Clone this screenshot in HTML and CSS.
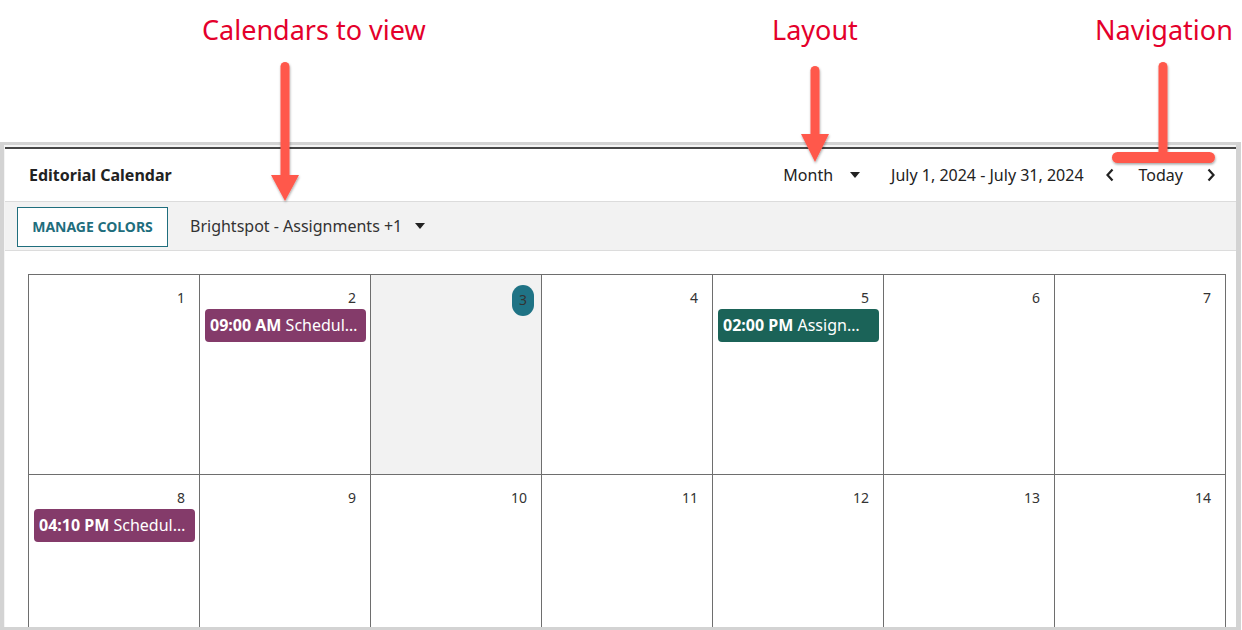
FILE: index.html
```html
<!DOCTYPE html>
<html lang="en">
<head>
<meta charset="utf-8">
<title>Editorial Calendar</title>
<link rel="stylesheet" href="styles.css">
</head>
<body>
<div class="page">
  <div class="frame">
    <div class="panel">
      <header class="head">
        <h1 class="title">Editorial Calendar</h1>
        <div class="controls">
          <div class="select">Month <span class="caret"></span></div>
          <div class="range">July 1, 2024 - July 31, 2024</div>
          <div class="nav">
            <svg class="chev" width="10" height="14" viewBox="0 0 10 14"><polyline points="7.5,1.5 2.5,7 7.5,12.5" fill="none" stroke="#222" stroke-width="2.2"/></svg>
            <span class="today">Today</span>
            <svg class="chev" width="10" height="14" viewBox="0 0 10 14"><polyline points="2.5,1.5 7.5,7 2.5,12.5" fill="none" stroke="#222" stroke-width="2.2"/></svg>
          </div>
        </div>
      </header>
      <div class="toolbar">
        <button class="btn">MANAGE COLORS</button>
        <div class="select cals">Brightspot - Assignments +1 <span class="caret"></span></div>
      </div>
      <div class="cal">
        <div class="grid">
          <div class="cell"><div class="dh"><span class="num">1</span></div></div>
          <div class="cell"><div class="dh"><span class="num">2</span></div><div class="ev purple"><b>09:00 AM</b> Scheduled Story</div></div>
          <div class="cell is-today"><div class="dh"><span class="num today-num">3</span></div></div>
          <div class="cell"><div class="dh"><span class="num">4</span></div></div>
          <div class="cell"><div class="dh"><span class="num">5</span></div><div class="ev green"><b>02:00 PM</b> Assignment Due</div></div>
          <div class="cell"><div class="dh"><span class="num">6</span></div></div>
          <div class="cell"><div class="dh"><span class="num">7</span></div></div>
          <div class="cell"><div class="dh"><span class="num">8</span></div><div class="ev purple"><b>04:10 PM</b> Scheduled Story</div></div>
          <div class="cell"><div class="dh"><span class="num">9</span></div></div>
          <div class="cell"><div class="dh"><span class="num">10</span></div></div>
          <div class="cell"><div class="dh"><span class="num">11</span></div></div>
          <div class="cell"><div class="dh"><span class="num">12</span></div></div>
          <div class="cell"><div class="dh"><span class="num">13</span></div></div>
          <div class="cell"><div class="dh"><span class="num">14</span></div></div>
        </div>
      </div>
    </div>
  </div>

  <div class="label l-cal">Calendars to view</div>
  <div class="label l-layout">Layout</div>
  <div class="label l-nav">Navigation</div>
  <svg class="arrows" width="1242" height="630" viewBox="0 0 1242 630">
    <defs>
      <filter id="sh" x="-50%" y="-50%" width="200%" height="200%">
        <feDropShadow dx="0.5" dy="1.5" stdDeviation="1.2" flood-color="#000" flood-opacity="0.35"/>
      </filter>
    </defs>
    <g fill="#ff594c" filter="url(#sh)">
      <rect x="280.5" y="62" width="9" height="118" rx="4.5"/>
      <polygon points="271,175 299,175 285,201"/>
      <rect x="810.5" y="66" width="9" height="73" rx="4.5"/>
      <polygon points="801,134 829,134 815,162"/>
      <rect x="1158.5" y="62" width="9" height="96" rx="4.5"/>
      <rect x="1112" y="152" width="103" height="11" rx="5.5"/>
    </g>
  </svg>
</div>
</body>
</html>
```

FILE: styles.css
```css
* { box-sizing: border-box; }
html, body { margin: 0; padding: 0; }
body {
  background: #fff;
  font-family: "Noto Sans", "Open Sans", sans-serif;
  color: #222;
  width: 1242px;
  height: 630px;
  overflow: hidden;
}
.page {
  position: relative;
  width: 1242px;
  height: 630px;
  padding-top: 142px;
}
.frame {
  width: 1241px;
  height: 488px;
  border: 3px solid #d3d3d3;
  border-left-width: 4px;
  border-right-width: 5px;
  padding: 2px 0 0 1px;
  background: #f4f4f4;
  overflow: hidden;
}
.panel {
  background: #fff;
  border-top: 2px solid #464646;
  height: 100%;
  overflow: hidden;
}
.head {
  height: 53px;
  display: flex;
  align-items: center;
  justify-content: space-between;
  padding: 0 20px 0 24px;
  border-bottom: 1px solid #dcdcdc;
}
.title {
  margin: 0;
  font-size: 16px;
  font-weight: 700;
  color: #222;
}
.controls {
  display: flex;
  align-items: center;
  font-size: 16px;
  color: #222;
}
.select {
  display: flex;
  align-items: center;
}
.caret {
  display: inline-block;
  width: 0;
  height: 0;
  border-left: 5px solid transparent;
  border-right: 5px solid transparent;
  border-top: 6px solid #222;
  margin-left: 17px;
}
.range { margin-left: 31px; }
.nav {
  display: flex;
  align-items: center;
  margin-left: 21px;
}
.today { margin: 0 23px 0 24px; }
.chev { display: block; }
.toolbar {
  height: 49px;
  background: #f2f2f2;
  border-bottom: 1px solid #dcdcdc;
  display: flex;
  align-items: center;
  padding-left: 12px;
}
.btn {
  width: 151px;
  height: 40px;
  background: #fff;
  border: 1px solid #1f6e7d;
  color: #1f6e7d;
  font-family: inherit;
  font-size: 14px;
  font-weight: 700;
  letter-spacing: 0;
  padding: 0;
  margin-top: 1px;
}
.cals {
  margin-left: 22px;
  font-size: 16px;
  color: #333;
}
.cals .caret { margin-left: 13px; }
.cal {
  padding: 23px 0 0 23px;
}
.grid {
  display: grid;
  grid-template-columns: repeat(7, 171px);
  grid-auto-rows: 200px;
  width: 1198px;
  border-top: 1px solid #6e6e6e;
  border-left: 1px solid #6e6e6e;
}
.cell {
  border-right: 1px solid #6e6e6e;
  border-bottom: 1px solid #6e6e6e;
  padding: 10px 4px 0 5px;
  min-width: 0;
}
.cell.is-today { background: #f2f2f2; }
.dh {
  height: 24px;
  display: flex;
  justify-content: flex-end;
  align-items: flex-start;
}
.num {
  font-size: 14px;
  line-height: 28px;
  margin-top: -1px;
  padding: 0 7px;
  margin-right: 3px;
  color: #333;
  border-radius: 11px;
}
.today-num {
  background: #1f7385;
  height: 31px;
  line-height: 29px;
  margin-top: 0;
}
.ev {
  height: 33px;
  border-radius: 4px;
  color: #fff;
  font-size: 16px;
  line-height: 33px;
  padding: 0 8px 0 5px;
  white-space: nowrap;
  overflow: hidden;
  text-overflow: ellipsis;
}
.ev b { font-weight: 700; }
.purple { background: #843b6a; }
.green { background: #1b6358; }

.label {
  position: absolute;
  top: 11px;
  font-size: 27px;
  line-height: 38px;
  color: #e4002b;
  white-space: nowrap;
}
.l-cal { left: 202px; }
.l-layout { left: 772px; }
.l-nav { left: 1095px; }
.arrows {
  position: absolute;
  left: 0;
  top: 0;
  pointer-events: none;
}
```
